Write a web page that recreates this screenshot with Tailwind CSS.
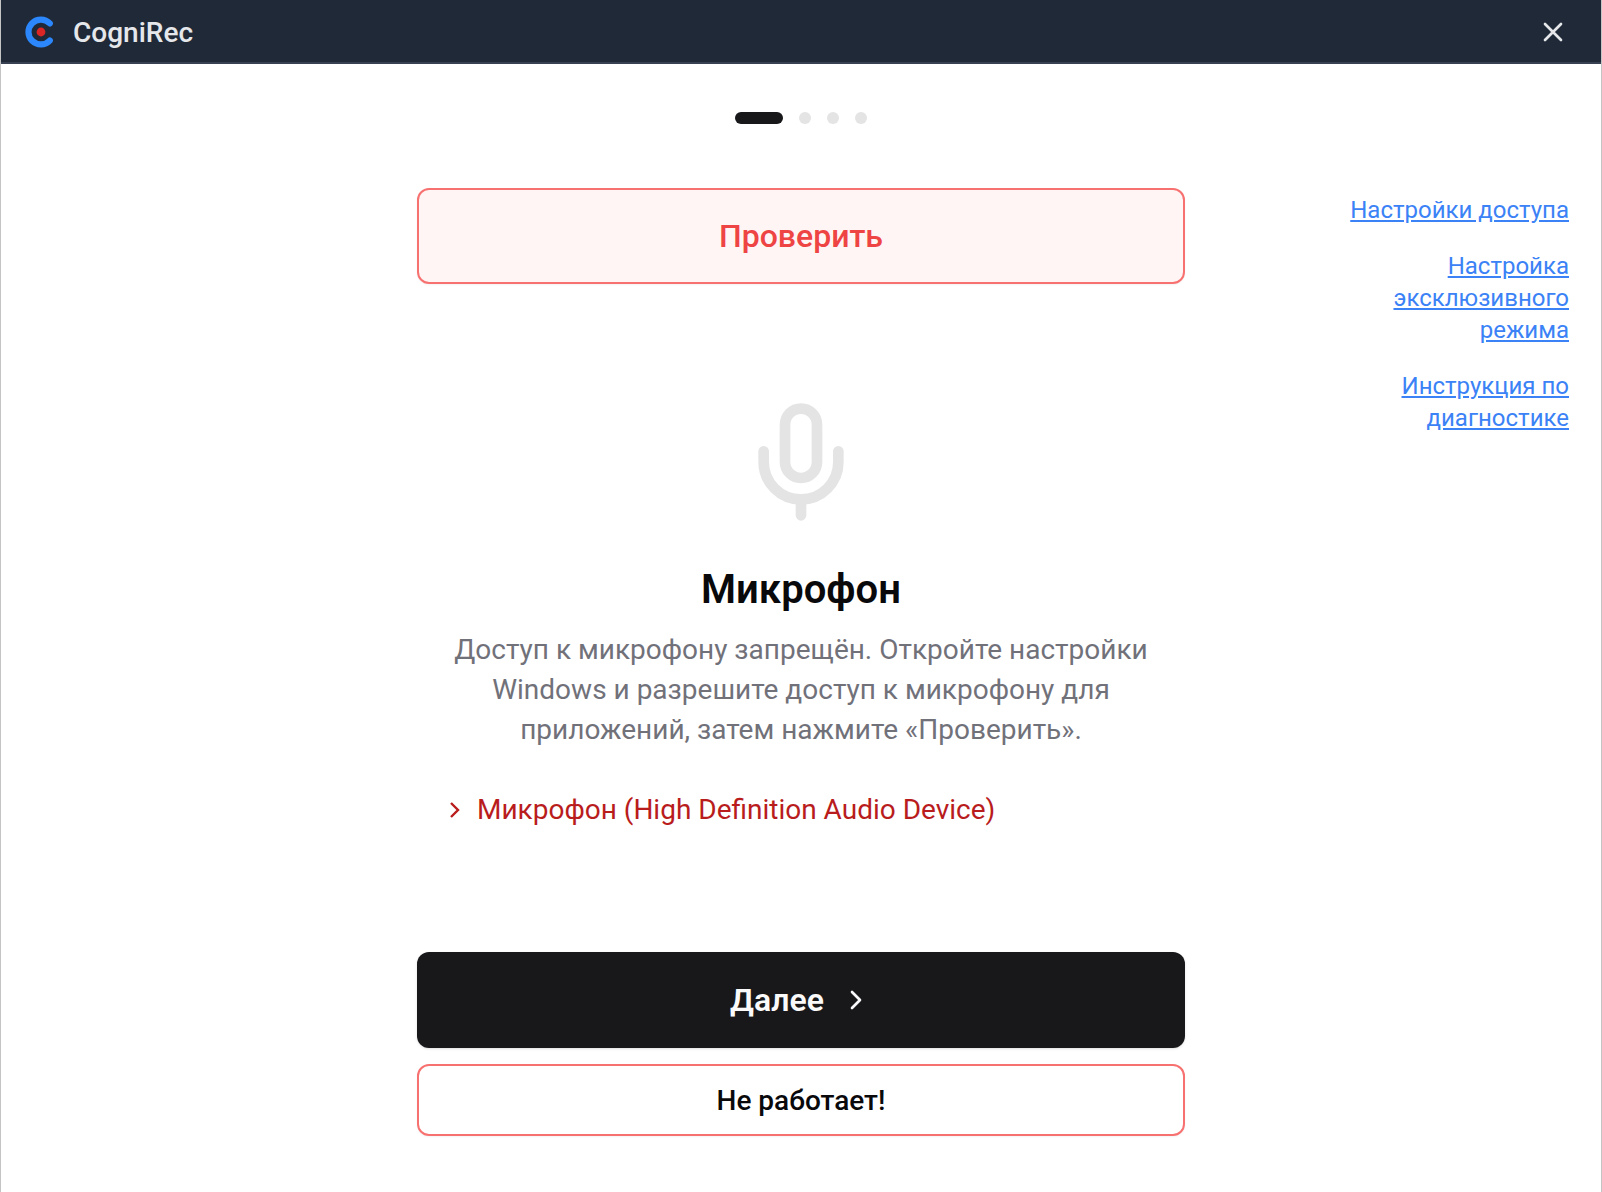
<!DOCTYPE html>
<html lang="ru">
<head>
<meta charset="utf-8">
<meta name="viewport" content="width=device-width, initial-scale=1">
<title>CogniRec</title>
<script src="https://cdn.jsdelivr.net/npm/@tailwindcss/browser@4"></script>
</head>
<body class="flex min-h-screen flex-col border-x border-[#c4c4c4] bg-white font-[Roboto,sans-serif] text-[#09090b]">
  <header class="flex h-16 items-center justify-between border-b-2 border-[#374151] bg-[#1f2937] pt-0.5 pr-8 pl-6">
    <div class="flex items-center gap-4">
      <svg class="size-8" viewBox="0 0 32 32" fill="none" aria-hidden="true">
        <path d="M24.8 7.4A12.4 12.4 0 1 0 24.8 24.6" stroke="#2b87fb" stroke-width="6.2" stroke-linecap="round"/>
        <circle cx="16" cy="16" r="4.4" fill="#dc2626"/>
      </svg>
      <h1 class="pt-0.5 text-[28px] leading-10 font-medium text-[#e5e7eb]">CogniRec</h1>
    </div>
    <button type="button" aria-label="Закрыть" class="text-[#e5e7eb]">
      <svg class="size-8" viewBox="0 0 24 24" fill="none" stroke="currentColor" stroke-width="2" stroke-linecap="round"><path d="M18 6 6 18M6 6l12 12"/></svg>
    </button>
  </header>

  <main class="grid flex-1 grid-cols-[1fr_768px_1fr] grid-rows-[auto_1fr] gap-y-16 pt-12 pb-14">
    <div class="col-start-2 flex justify-center gap-4">
      <span class="h-3 w-12 rounded-full bg-[#18181b]"></span>
      <span class="size-3 rounded-full bg-[#e4e4e5]"></span>
      <span class="size-3 rounded-full bg-[#e4e4e5]"></span>
      <span class="size-3 rounded-full bg-[#e4e4e5]"></span>
    </div>

    <section class="col-start-2 row-start-2 flex flex-col">
      <button type="button" class="h-24 rounded-xl border-2 border-[#f87171] bg-[#fef5f4] text-[32px] leading-10 font-medium text-[#ef4444] shadow-xs">Проверить</button>

      <div class="flex flex-1 flex-col items-center justify-center px-8 pb-2">
        <svg class="size-32 text-[#e4e4e5]" viewBox="0 0 24 24" fill="none" stroke="currentColor" stroke-width="2" stroke-linecap="round" stroke-linejoin="round" aria-hidden="true">
          <path d="M12 19v3"/><path d="M19 10v2a7 7 0 0 1-14 0v-2"/><rect x="9" y="2" width="6" height="13" rx="3"/>
        </svg>
        <h2 class="mt-10 text-[40px] leading-12 font-semibold">Микрофон</h2>
        <p class="mt-4 text-center text-[28px] leading-10 text-[#71717a]">Доступ к микрофону запрещён. Откройте настройки Windows и разрешите доступ к микрофону для приложений, затем нажмите «Проверить».</p>
        <button type="button" class="mt-10 flex items-center gap-3 self-start text-[28px] leading-10 text-[#b91c1c]">
          <svg class="size-4" viewBox="0 0 16 16" fill="none" stroke="currentColor" stroke-width="2.4" aria-hidden="true"><path d="m2 1 7 7-7 7"/></svg>
          <span>Микрофон (High Definition Audio Device)</span>
        </button>
      </div>

      <button type="button" class="flex h-24 items-center justify-center gap-4 rounded-xl bg-[#18181b] text-[32px] leading-10 font-semibold text-[#fafafa] shadow-sm">
        Далее
        <svg class="size-8" viewBox="0 0 24 24" fill="none" stroke="currentColor" stroke-width="2" stroke-linecap="round" stroke-linejoin="round" aria-hidden="true"><path d="m9 18 6-6-6-6"/></svg>
      </button>
      <button type="button" class="mt-4 h-18 rounded-xl border-2 border-[#f87171] bg-white pt-0.5 text-[28px] leading-10 font-medium shadow-xs">Не работает!</button>
    </section>

    <nav class="col-start-3 row-start-2 flex w-60 flex-col items-end gap-6 justify-self-end pt-1.5 pr-8 text-right text-2xl leading-8 text-[#3b82f6]">
      <a href="#" class="whitespace-nowrap underline">Настройки доступа</a>
      <a href="#" class="underline">Настройка эксклюзивного режима</a>
      <a href="#" class="underline">Инструкция по диагностике</a>
    </nav>
  </main>
</body>
</html>
